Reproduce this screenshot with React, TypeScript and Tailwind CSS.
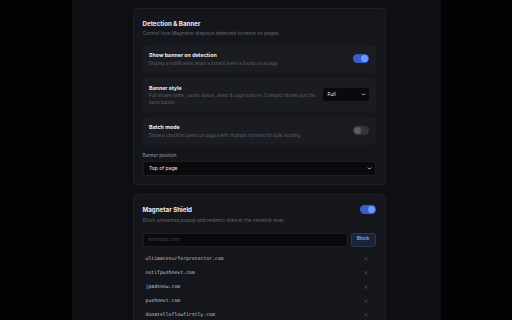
import { ChevronDown, X } from "lucide-react";

const blocked = [
  "ultimatesurferprotector.com",
  "notifpushnext.com",
  "jpadsnow.com",
  "pushnext.com",
  "donatelloflowfirstly.com",
];

function Toggle({ on }: { on: boolean }) {
  return (
    <div
      className={`w-[16px] h-[9px] rounded-full flex items-center px-[1px] shrink-0 ${
        on ? "bg-[#3c5dc9] justify-end" : "bg-[#34353c] justify-start"
      }`}
    >
      <span
        className={`w-[7px] h-[7px] rounded-full ${
          on ? "bg-[#6b9bff]" : "bg-[#5a5b63]"
        }`}
      />
    </div>
  );
}

function SettingRow({
  title,
  desc,
  children,
}: {
  title: string;
  desc: string;
  children: React.ReactNode;
}) {
  return (
    <div className="flex items-center justify-between gap-[6px] rounded-[3px] bg-[#1b1c22] pl-[6.5px] pr-[7px] py-[6px]">
      <div className="min-w-0 flex-1">
        <div className="text-[5.3px] leading-[8px] font-bold text-[#ededf1]">
          {title}
        </div>
        <div className="mt-[0.5px] text-[4.5px] leading-[7px] text-[#5e616b]">
          {desc}
        </div>
      </div>
      {children}
    </div>
  );
}

export default function App() {
  return (
    <div
      className="w-full h-[320px] bg-[#030304] flex justify-center overflow-hidden"
      style={{ fontFamily: "Inter, 'Noto Sans', sans-serif" }}
    >
      <div className="w-[369px] h-full bg-[#0e0f13] pl-[61px] pr-[55px] pt-[8px]">
        {/* Detection & Banner */}
        <section className="rounded-[4px] border border-[#1f2026] bg-[#15161b] px-[9px] pt-[10px] pb-[8px]">
          <h2 className="text-[6.2px] leading-[9px] font-bold text-[#ededf1]">
            Detection &amp; Banner
          </h2>
          <p className="mt-[2px] text-[4.9px] leading-[7px] text-[#61646e]">
            Control how Magnetar displays detected torrents on pages.
          </p>

          <div className="mt-[8px] flex flex-col gap-[5px]">
            <SettingRow
              title="Show banner on detection"
              desc="Display a notification when a torrent hash is found on a page"
            >
              <Toggle on />
            </SettingRow>
            <SettingRow
              title="Banner style"
              desc="Full shows name, cache status, share & copy buttons. Compact shows just the send button."
            >
              <div className="w-[46px] h-[13px] shrink-0 rounded-[2px] bg-[#0a0a0d] flex items-center justify-between pl-[5px] pr-[3px]">
                <span className="text-[5px] text-[#e6e6ea]">Full</span>
                <ChevronDown className="w-[5px] h-[5px] text-[#e6e6ea]" strokeWidth={4} />
              </div>
            </SettingRow>
            <SettingRow
              title="Batch mode"
              desc="Show a checklist panel on pages with multiple torrents for bulk sending"
            >
              <Toggle on={false} />
            </SettingRow>
          </div>

          <div className="mt-[7px] text-[4.6px] leading-[7px] text-[#9a9ca5]">
            Banner position
          </div>
          <div className="mt-[2.5px] h-[15px] rounded-[2px] border border-[#1c1d23] bg-[#0a0a0d] flex items-center justify-between pl-[5.5px] pr-[2.5px]">
            <span className="text-[5px] text-[#e6e6ea]">Top of page</span>
            <ChevronDown className="w-[5px] h-[5px] text-[#e6e6ea]" strokeWidth={4} />
          </div>
        </section>

        {/* Magnetar Shield */}
        <section className="mt-[9px] rounded-[4px] border border-[#1f2026] bg-[#15161b] px-[9px] pt-[10px] pb-[8px]">
          <div className="flex items-center justify-between">
            <h2 className="text-[6.2px] leading-[9px] font-bold text-[#ededf1]">
              Magnetar Shield
            </h2>
            <Toggle on />
          </div>
          <p className="mt-[3px] text-[4.9px] leading-[7px] text-[#61646e]">
            Block unwanted popup and redirect sites at the network level.
          </p>

          <div className="mt-[8.5px] flex gap-[3px] h-[14.5px]">
            <div className="flex-1 rounded-[2px] border border-[#1d1e24] bg-[#0a0a0d] flex items-center pl-[4.5px]">
              <span className="text-[5px] text-[#3d3f47]">example.com</span>
            </div>
            <button className="w-[25px] flex items-center justify-center rounded-[3px] border border-[#2b3956] bg-[#1b2336] text-[4.6px] leading-none font-bold text-[#7f9fe8]">
              Block
            </button>
          </div>

          <ul className="mt-[5px]">
            {blocked.map((d) => (
              <li
                key={d}
                className="h-[14px] flex items-center justify-between pl-[3px] pr-[6.5px]"
              >
                <span
                  className="text-[4.8px] text-[#c5c6cc]"
                  style={{ fontFamily: "'DejaVu Sans Mono', 'Liberation Mono', monospace" }}
                >
                  {d}
                </span>
                <X className="w-[6px] h-[6px] text-[#5c5e66]" strokeWidth={2} />
              </li>
            ))}
          </ul>
        </section>
      </div>
    </div>
  );
}
